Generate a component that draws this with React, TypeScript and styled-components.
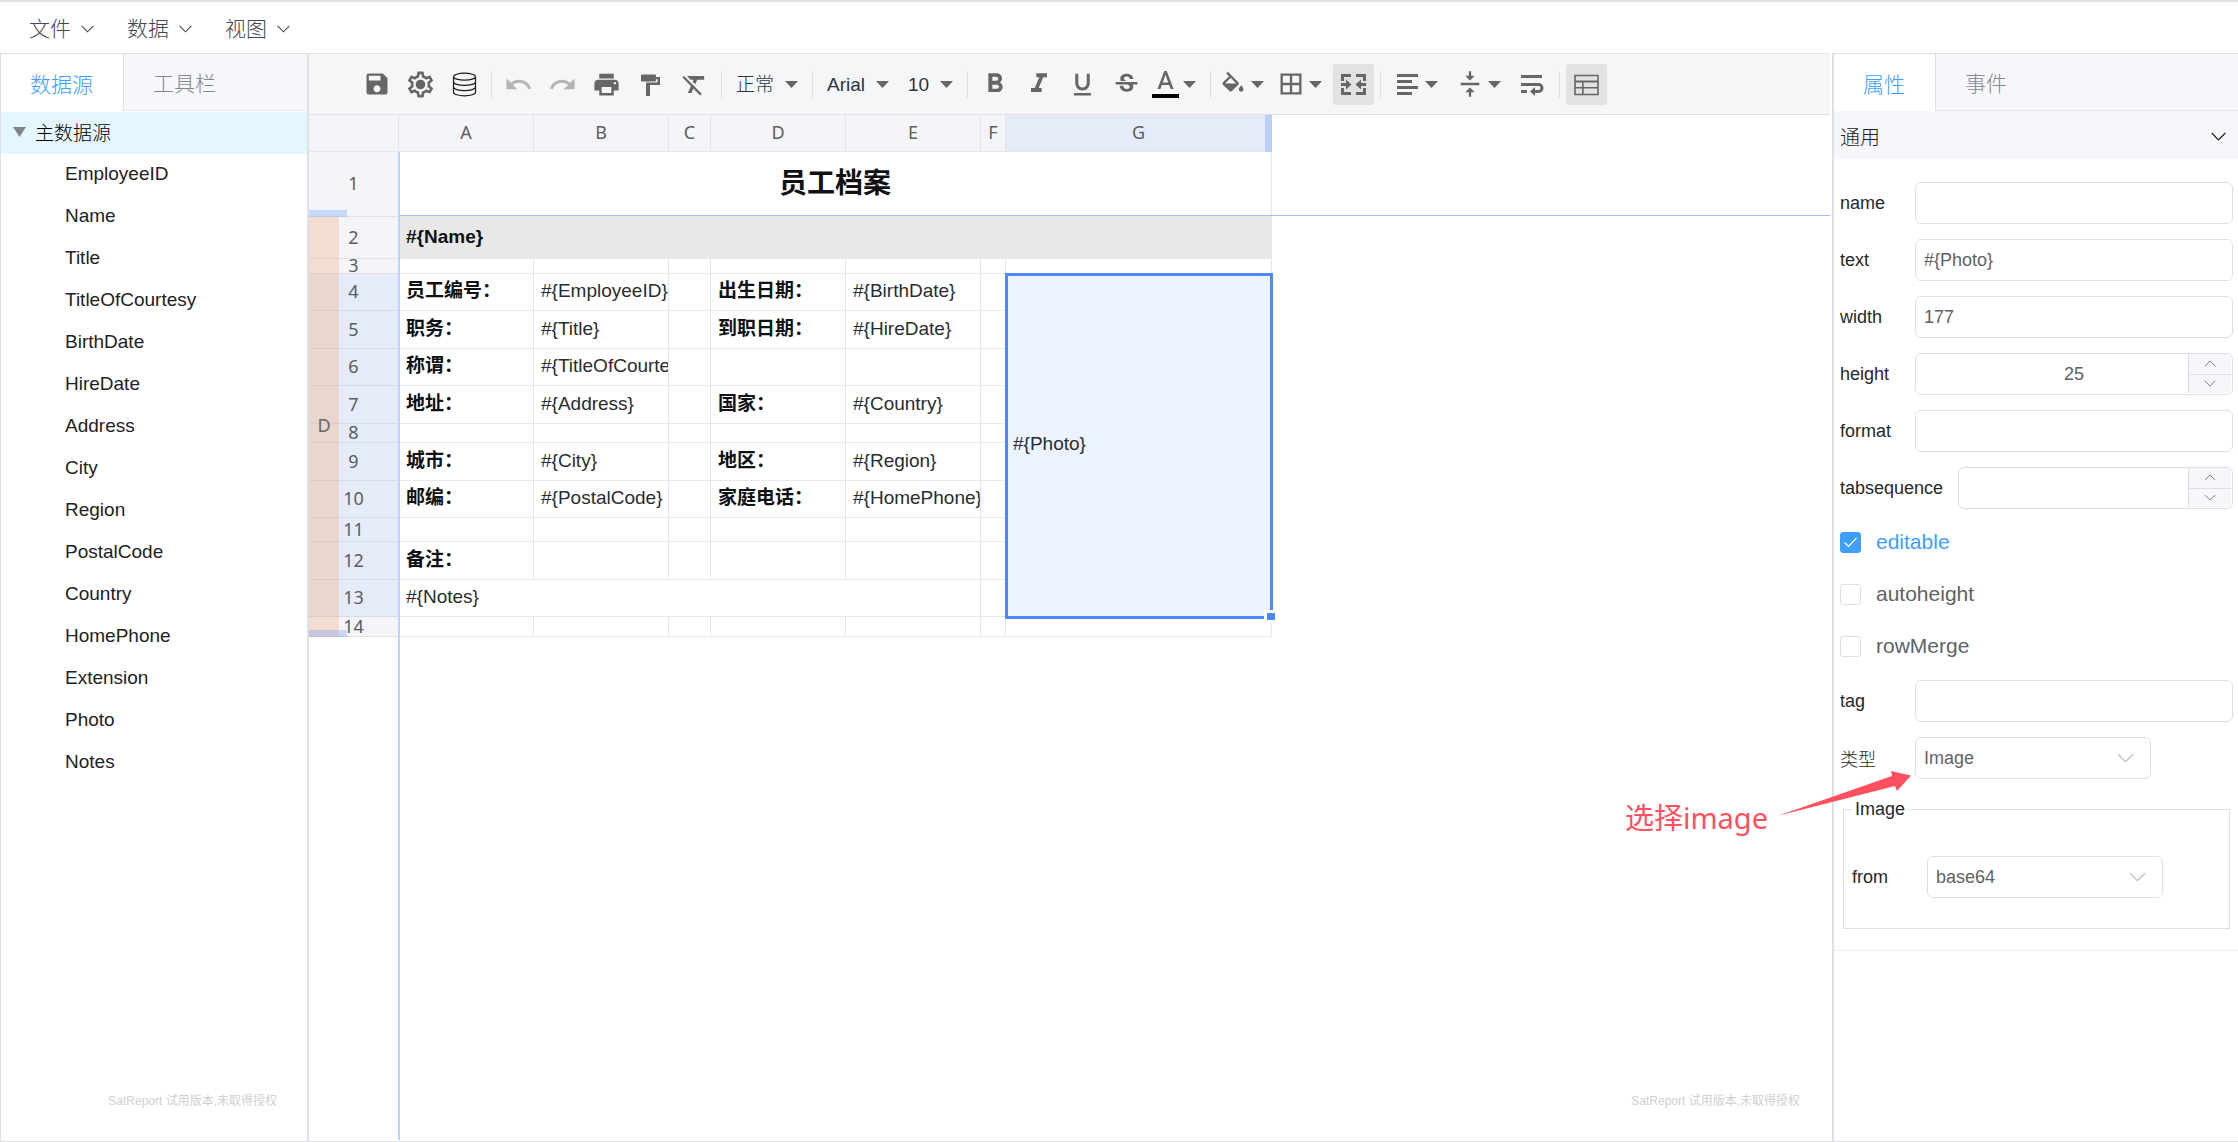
import React from 'react';
import styled, { createGlobalStyle } from 'styled-components';
import {
  MdSave,
  MdUndo,
  MdRedo,
  MdPrint,
  MdFormatClear,
  MdFormatBold,
  MdFormatItalic,
  MdFormatUnderlined,
  MdStrikethroughS,
  MdBorderAll,
  MdVerticalAlignCenter,
} from 'react-icons/md';

const line = '#dcdfe6';
const primary = '#409eff';
const accent = '#4b89ff';
const iconGray = '#666666';
const headBg = '#f4f5f8';
const headSelected = '#e5ebf8';

const GlobalStyle = createGlobalStyle`
  *, *::before, *::after { box-sizing: border-box; }
  body {
    margin: 0;
    background: #fff;
    font-family: "Liberation Sans", "Noto Sans CJK SC", sans-serif;
    color: #26272a;
  }
  button, input, select { font: inherit; color: inherit; margin: 0; }
  button { border: 0; background: none; padding: 0; cursor: pointer; }
`;

const Page = styled.div`
  display: flex;
  flex-direction: column;
  min-height: 100vh;
  border-top: 2px solid #e1e1e3;
  border-bottom: 1px solid #dfe0e3;
`;

/* ---------- menu ---------- */

const MenuBar = styled.nav`
  display: flex;
  align-items: center;
  gap: 33px;
  height: 51px;
  padding: 2px 29px 0;
`;

const MenuButton = styled.button`
  display: flex;
  align-items: center;
  gap: 10px;
  font-size: 21px;
  font-weight: 300;
  line-height: 30px;
  color: #45474c;
`;

const Workspace = styled.div`
  flex: 1;
  display: grid;
  grid-template-columns: 309px minmax(0, 1fr) 406px;
`;

/* ---------- tabs ---------- */

const Tabs = styled.div`
  display: flex;
  height: 58px;
  background: #f5f7fa;
  border-top: 1px solid ${line};
  border-bottom: 1px solid #e4e7ed;
`;

const Tab = styled.button<{ $active?: boolean }>`
  padding: 0 30px 0 29px;
  margin-bottom: ${p => (p.$active ? '-1px' : '0')};
  font-size: 21px;
  font-weight: 300;
  color: ${p => (p.$active ? primary : '#85888f')};
  background: ${p => (p.$active ? '#fff' : 'transparent')};
  border-right: 1px solid ${p => (p.$active ? line : 'transparent')};
`;

/* ---------- data source panel ---------- */

const SourcePanel = styled.aside`
  display: flex;
  flex-direction: column;
  border-left: 1px solid ${line};
  border-right: 2px solid #dfe1e6;
`;

const Tree = styled.ul`
  list-style: none;
  margin: 0;
  padding: 1px 0 0;
  font-size: 19px;
  color: #1f2124;
`;

const TreeRow = styled.button<{ $root?: boolean }>`
  display: flex;
  align-items: center;
  gap: 9px;
  width: 100%;
  height: 42px;
  padding: 0 0 3px ${p => (p.$root ? '12px' : '64px')};
  font-weight: ${p => (p.$root ? 300 : 400)};
  color: ${p => (p.$root ? '#000' : '#1f2124')};
  text-align: left;
  background: ${p => (p.$root ? '#e4f6fe' : 'transparent')};
`;

const Watermark = styled.p`
  align-self: flex-end;
  margin: auto 30px 31px 0;
  font-size: 12px;
  line-height: 18px;
  color: #cfcfcf;
`;

/* ---------- toolbar ---------- */

const Center = styled.main`
  display: flex;
  flex-direction: column;
  margin-right: 2px;
`;

const Toolbar = styled.div`
  display: flex;
  align-items: center;
  gap: 3px;
  height: 62px;
  padding-left: 47px;
  background: #f5f6f8;
  border-top: 1px solid #e4e5e8;
  border-bottom: 1px solid #dfe1e4;
  color: ${iconGray};
`;

const ToolButton = styled.button<{ $on?: boolean; $faded?: boolean }>`
  display: flex;
  align-items: center;
  justify-content: center;
  width: 41px;
  height: 41px;
  border-radius: 3px;
  background: ${p => (p.$on ? '#e1e2e4' : 'transparent')};
  opacity: ${p => (p.$faded ? 0.45 : 1)};
`;

const DropButton = styled.button<{ $wide?: boolean }>`
  display: flex;
  align-items: center;
  gap: 4px;
  height: 41px;
  padding: 0 8px 0 ${p => (p.$wide ? '7px' : '2px')};
`;

const ToolSelectBox = styled.span`
  position: relative;
  display: flex;
  align-items: center;
  > svg { position: absolute; right: 8px; pointer-events: none; }
`;

const ToolSelect = styled.select`
  appearance: none;
  height: 41px;
  padding: 0 31px 0 8px;
  border: 0;
  background: none;
  font-size: 19px;
  font-weight: 300;
  color: #2a3542;
`;

const Divider = styled.span`
  width: 1px;
  height: 27px;
  margin: 0 3px;
  background: #dcdee1;
`;

/* ---------- sheet ---------- */

const SheetArea = styled.section`
  position: relative;
  flex: 1;
  display: flex;
  flex-direction: column;
  align-items: flex-start;
`;

const Sheet = styled.table`
  table-layout: fixed;
  width: 963px;
  border-spacing: 0;
  font-size: 19px;
  color: #1b1c1e;
`;

const ColHead = styled.th<{ $selected?: boolean }>`
  padding: 0 0 3px;
  font: 400 18px/26px "Noto Sans", sans-serif;
  color: #5c5d60;
  background: ${p => (p.$selected ? headSelected : headBg)};
  border-right: 1px solid #e2e4e8;
  border-bottom: 1px solid #e4e6ea;
`;

const RowHead = styled.th<{ $selected?: boolean; $band?: boolean }>`
  padding: 0 0 2px;
  font: 400 18px/12px "Noto Sans", sans-serif;
  color: #5c5d60;
  background: ${p => {
    const base = p.$selected ? headSelected : headBg;
    const band = p.$selected ? '#e8d6cf' : '#f4ddd0';
    return p.$band ? `linear-gradient(to right, ${band} 30px, ${base} 30px)` : base;
  }};
  border-right: 1px solid #e2e4e8;
  border-bottom: 1px solid rgba(190, 180, 185, 0.32);
`;

const Cell = styled.td<{ $bold?: boolean; $fill?: boolean; $title?: boolean }>`
  position: relative;
  padding: ${p => (p.$title ? '0' : '0 0 2px 7px')};
  overflow: hidden;
  white-space: nowrap;
  font-size: ${p => (p.$title ? '28px' : '19px')};
  line-height: ${p => (p.$title ? '36px' : '22px')};
  font-weight: ${p => (p.$bold ? 700 : 400)};
  text-align: ${p => (p.$title ? 'center' : 'left')};
  color: ${p => (p.$bold ? '#101112' : '#2b2c2e')};
  background: ${p => (p.$fill ? '#e8e8e8' : '#fff')};
  border-right: 1px solid ${p => (p.$fill ? '#e6e6e6' : '#e5e6e8')};
  border-bottom: 1px solid #e8e9eb;
`;

const SelectedCell = styled(Cell)`
  z-index: 1;
  overflow: visible;
  background: #ecf2fe;
`;

const SelectionBox = styled.div`
  position: absolute;
  inset: -1px -2px -3px -1px;
  border: 3px solid ${accent};
`;

const FillHandle = styled.div`
  position: absolute;
  right: -7px;
  bottom: -7px;
  width: 14px;
  height: 13px;
  background: ${accent};
  border: 3px solid #fff;
`;

const BandLabel = styled.span`
  position: absolute;
  left: 0;
  top: 100px;
  width: 30px;
  height: 420px;
  display: flex;
  align-items: center;
  justify-content: center;
  font: 400 18px/26px "Noto Sans", sans-serif;
  color: #6b6667;
`;

const BandGrip = styled.span<{ $top: number }>`
  position: absolute;
  left: 0;
  top: ${p => p.$top}px;
  width: 38px;
  height: 7px;
  background: rgba(75, 137, 255, 0.26);
`;

const ColumnGrip = styled.span`
  position: absolute;
  left: 956px;
  top: 0;
  width: 7px;
  height: 37px;
  background: rgba(75, 137, 255, 0.26);
`;

const FreezeColumn = styled.span`
  position: absolute;
  left: 89px;
  top: 37px;
  bottom: 1px;
  width: 2px;
  background: #bfd2fb;
`;

const FreezeRow = styled.span`
  position: absolute;
  left: 90px;
  right: 0;
  top: 100px;
  height: 1px;
  background: #9dbdf9;
`;

/* ---------- properties panel ---------- */

const PropsPanel = styled.aside`
  position: relative;
  border-left: 2px solid ${line};
  font-size: 18px;
`;

const Section = styled.button`
  display: flex;
  align-items: center;
  justify-content: space-between;
  width: 100%;
  height: 48px;
  padding: 2px 12px 0 6px;
  background: #f5f7fa;
  font-size: 20px;
  font-weight: 300;
  color: #1d1e20;
`;

const Form = styled.form`
  display: flex;
  flex-direction: column;
  gap: 15px;
  padding: 23px 5px 21px 6px;
  border-bottom: 1px solid #ebeef5;
`;

const Field = styled.div`
  display: flex;
  align-items: center;
  gap: 15px;
`;

const Label = styled.label`
  min-width: 60px;
  font-weight: 300;
`;

const TextInput = styled.input<{ $center?: boolean }>`
  flex: 1;
  min-width: 0;
  width: 100%;
  height: 42px;
  padding: 0 8px;
  border: 1px solid ${line};
  border-radius: 6px;
  background: #fff;
  color: #606266;
  outline: none;
  text-align: ${p => (p.$center ? 'center' : 'left')};
`;

const NumberBox = styled.div`
  position: relative;
  flex: 1;
  display: flex;
`;

const Steppers = styled.div`
  position: absolute;
  top: 1px;
  right: 2px;
  bottom: 2px;
  width: 43px;
  display: grid;
  grid-template-rows: 1fr 1fr;
  background: #f5f7fa;
  border-left: 1px solid ${line};
  border-radius: 0 5px 5px 0;
`;

const Step = styled.button`
  display: flex;
  align-items: center;
  justify-content: center;
  color: #75777c;
  & + & { border-top: 1px solid ${line}; }
`;

const Checks = styled.div`
  display: flex;
  flex-direction: column;
  gap: 22px;
  padding: 3px 0 4px;
`;

const CheckLabel = styled.label<{ $on?: boolean }>`
  display: flex;
  align-items: center;
  gap: 15px;
  height: 30px;
  font-size: 21px;
  color: ${p => (p.$on ? primary : '#606266')};
`;

const CheckBox = styled.span`
  display: grid;
  place-items: center;
  > * { grid-area: 1 / 1; }
  > svg { pointer-events: none; }
`;

const CheckInput = styled.input`
  appearance: none;
  width: 21px;
  height: 21px;
  border: 1px solid ${line};
  border-radius: 3px;
  background: #fff;
  &:checked { background: ${primary}; border-color: ${primary}; }
`;

const SelectBox = styled.span`
  position: relative;
  display: flex;
  align-items: center;
  width: 236px;
  > svg { position: absolute; right: 17px; pointer-events: none; }
`;

const Select = styled.select`
  appearance: none;
  width: 100%;
  height: 42px;
  padding: 0 40px 0 8px;
  border: 1px solid ${line};
  border-radius: 6px;
  background: #fff;
  color: #606266;
`;

const Group = styled.fieldset`
  min-width: 0;
  margin: 4px 3px 0;
  padding: 36px 8px 30px;
  border: 1px solid ${line};
`;

const Legend = styled.legend`
  padding: 0 3px;
  line-height: 22px;
`;

const Note = styled.div`
  position: absolute;
  top: 717px;
  right: 326px;
  display: flex;
  align-items: flex-start;
  gap: 8px;
  color: #ff5060;
  white-space: nowrap;
`;

const NoteText = styled.span`
  margin-top: 28px;
  font-family: "Noto Sans", "Noto Sans CJK SC", sans-serif;
  font-size: 29px;
  line-height: 40px;
`;

/* ---------- drawings ---------- */

const Chevron = ({ w = 13, up, color = 'currentColor' }: { w?: number; up?: boolean; color?: string }) => (
  <svg width={w} height={Math.round(w * 0.6)} viewBox="0 0 15 9" fill="none" stroke={color} strokeWidth="1.200">
    <path d={up ? 'M.7 8 7.5 1.2 14.3 8' : 'M.7 1 7.5 7.8 14.3 1'} />
  </svg>
);

const Caret = () => (
  <svg width="13" height="7" viewBox="0 0 13 7" fill={iconGray}>
    <path d="M0 0h13L6.500 7z" />
  </svg>
);

const Glyph = ({ children, box = '0 0 27 27' }: { children: React.ReactNode; box?: string }) => (
  <svg width="27" height="27" viewBox={box} fill="currentColor">
    {children}
  </svg>
);

const GearIcon = () => (
  <svg width="31" height="31" viewBox="0 0 24 24" fill="currentColor">
    <path d="M19.43 12.98c.04-.32.07-.64.07-.98 0-.34-.03-.66-.07-.98l2.110-1.650c.19-.15.24-.42.12-.64l-2-3.460c-.09-.16-.26-.25-.44-.25-.06 0-.12.01-.17.03l-2.490 1c-.52-.4-1.080-.73-1.690-.98l-.38-2.650C14.460 2.180 14.250 2 14 2h-4c-.25 0-.46.18-.49.42l-.38 2.650c-.61.25-1.170.59-1.690.98l-2.490-1c-.06-.02-.12-.03-.18-.03-.17 0-.34.09-.43.25l-2 3.460c-.13.22-.07.49.12.64l2.110 1.650c-.04.32-.07.65-.07.98 0 .33.03.66.07.98l-2.110 1.650c-.19.15-.24.42-.12.64l2 3.460c.09.16.26.25.44.25.06 0 .12-.01.17-.03l2.490-1c.52.4 1.080.73 1.690.98l.38 2.650c.03.24.24.42.49.42h4c.25 0 .46-.18.49-.42l.38-2.650c.61-.25 1.170-.59 1.690-.98l2.490 1c.06.02.12.03.18.03.17 0 .34-.09.43-.25l2-3.460c.12-.22.07-.49-.12-.64l-2.110-1.650zm-1.980-1.710c.04.31.05.52.05.73 0 .21-.02.43-.05.73l-.14 1.130.89.7 1.080.84-.7 1.210-1.270-.51-1.040-.42-.9.68c-.43.32-.84.56-1.250.73l-1.060.43-.16 1.130-.2 1.350h-1.400l-.19-1.350-.16-1.130-1.060-.43c-.43-.18-.83-.41-1.230-.71l-.91-.7-1.060.43-1.270.51-.7-1.210 1.080-.84.89-.7-.14-1.130c-.03-.31-.05-.54-.05-.74s.02-.43.05-.73l.14-1.130-.89-.7-1.080-.84.7-1.210 1.270.51 1.040.42.9-.68c.43-.32.84-.56 1.250-.73l1.060-.43.16-1.130.2-1.350h1.390l.19 1.350.16 1.130 1.060.43c.43.18.83.41 1.230.71l.91.7 1.060-.43 1.270-.51.7 1.210-1.070.85-.89.7.14 1.130z" />
    <circle cx="12" cy="12" r="3.700" />
  </svg>
);

const DatabaseIcon = () => (
  <svg width="27" height="27" viewBox="0 0 27 27" fill="none" stroke="#1c1c1c" strokeWidth="1.200">
    <ellipse cx="13.500" cy="5.700" rx="11" ry="3.500" />
    <path d="M2.500 5.700v15.600c0 1.900 4.900 3.500 11 3.500s11-1.600 11-3.500V5.700" />
    <path d="M2.500 10.900c0 1.900 4.900 3.500 11 3.500s11-1.600 11-3.500M2.500 16.100c0 1.900 4.900 3.500 11 3.500s11-1.600 11-3.500" />
  </svg>
);

const PaintIcon = () => (
  <Glyph>
    <path d="M4 4.500a1 1 0 0 1 1-1h13a1 1 0 0 1 1 1V6h4v8H13v11H9V11.500h11.500V8.300H19v1.200a1 1 0 0 1-1 1H5a1 1 0 0 1-1-1z" />
  </Glyph>
);

const TextColorIcon = () => (
  <Glyph>
    <path d="M12.300 0 5.500 18h2.900l1.500-4h7.300l1.500 4h2.900L14.700 0zm-1.500 11.500 2.700-7.700 2.700 7.700z" />
    <path d="M0 23h27v4H0z" fill="#000" />
  </Glyph>
);

const FillIcon = () => (
  <svg width="28" height="28" viewBox="0 -1.500 24 24" fill="currentColor">
    <path d="M16.560 8.940 7.620 0 6.210 1.410l2.380 2.380-5.150 5.150c-.59.59-.59 1.540 0 2.120l5.500 5.500c.29.29.68.44 1.060.44s.77-.15 1.060-.44l5.500-5.500c.59-.58.59-1.530 0-2.120zM5.210 10 10 5.210 14.790 10H5.210zM19 11.500s-2 2.170-2 3.500c0 1.100.9 2 2 2s2-.9 2-2c0-1.330-2-3.500-2-3.500z" />
  </svg>
);

const MergeIcon = () => (
  <Glyph>
    <path d="M1 3h10v3H4v4H1zM16 3h10v7h-3V6h-7zM1 17h3v4h7v3H1zM23 17h3v7H16v-3h7zM1 12h5V8.500l5.500 5-5.500 5V15H1zM26 12h-5V8.500l-5.500 5 5.500 5V15h5z" />
  </Glyph>
);

const AlignIcon = () => (
  <Glyph>
    <path d="M3 3h21v3H3zM3 9h15v3H3zM3 15h21v3H3zM3 21h15v3H3z" />
  </Glyph>
);

const WrapIcon = () => (
  <Glyph>
    <path d="M2 4h21v3H2zM2 19h6v3H2zM2 12h17.500a5 5 0 0 1 0 10H16v3l-5-4.500 5-4.500v3h3.500a2 2 0 0 0 0-4H2z" />
  </Glyph>
);

const FreezeIcon = () => (
  <Glyph>
    <path d="M2 4.500h23v19H2z" fill="none" stroke="currentColor" strokeWidth="1.600" />
    <path d="M2 9.500h23v2H2zM9 11h1.600v12H9zM2 16h23v1.600H2z" />
  </Glyph>
);

/* ---------- data ---------- */

const fields = [
  'EmployeeID', 'Name', 'Title', 'TitleOfCourtesy', 'BirthDate', 'HireDate', 'Address', 'City',
  'Region', 'PostalCode', 'Country', 'HomePhone', 'Extension', 'Photo', 'Notes',
];

const columns = [
  { name: 'A', width: 135 },
  { name: 'B', width: 135 },
  { name: 'C', width: 42 },
  { name: 'D', width: 135 },
  { name: 'E', width: 135 },
  { name: 'F', width: 25 },
  { name: 'G', width: 266 },
];

/* Each row of the record block: height, then the texts of columns A, B, D and E. */
const rows: { n: number; h: number; t?: string[] }[] = [
  { n: 4, h: 37, t: ['员工编号：', '#{EmployeeID}', '出生日期：', '#{BirthDate}'] },
  { n: 5, h: 38, t: ['职务：', '#{Title}', '到职日期：', '#{HireDate}'] },
  { n: 6, h: 37, t: ['称谓：', '#{TitleOfCourtesy}', '', ''] },
  { n: 7, h: 38, t: ['地址：', '#{Address}', '国家：', '#{Country}'] },
  { n: 8, h: 19 },
  { n: 9, h: 38, t: ['城市：', '#{City}', '地区：', '#{Region}'] },
  { n: 10, h: 37, t: ['邮编：', '#{PostalCode}', '家庭电话：', '#{HomePhone}'] },
  { n: 11, h: 24 },
  { n: 12, h: 38, t: ['备注：', '', '', ''] },
];

const Row = styled.tr<{ $h: number }>`
  height: ${p => p.$h}px;
`;

const ReportSheet = () => (
  <Sheet lang="zh-CN">
    <colgroup>
      <col style={{ width: 90 }} />
      {columns.map(c => <col key={c.name} style={{ width: c.width }} />)}
    </colgroup>
    <thead>
      <Row $h={37}>
        <ColHead />
        {columns.map(c => <ColHead key={c.name} scope="col" $selected={c.name === 'G'}>{c.name}</ColHead>)}
      </Row>
    </thead>
    <tbody>
      <Row $h={65}>
        <RowHead scope="row">1</RowHead>
        <Cell colSpan={7} $title $bold>员工档案</Cell>
      </Row>
      <Row $h={42}>
        <RowHead scope="row" $band>2</RowHead>
        <Cell $bold $fill>{'#{Name}'}</Cell>
        {columns.slice(1).map(c => <Cell key={c.name} $fill />)}
      </Row>
      <Row $h={15}>
        <RowHead scope="row" $band>3</RowHead>
        {columns.map(c => <Cell key={c.name} />)}
      </Row>
      {rows.map(({ n, h, t = [] }) => (
        <Row key={n} $h={h}>
          <RowHead scope="row" $band $selected>{n}</RowHead>
          <Cell $bold>{t[0]}</Cell>
          <Cell>{t[1]}</Cell>
          <Cell />
          <Cell $bold>{t[2]}</Cell>
          <Cell>{t[3]}</Cell>
          <Cell />
          {n === 4 && (
            <SelectedCell rowSpan={10}>
              {'#{Photo}'}
              <SelectionBox />
              <FillHandle />
            </SelectedCell>
          )}
        </Row>
      ))}
      <Row $h={37}>
        <RowHead scope="row" $band $selected>13</RowHead>
        <Cell colSpan={5}>{'#{Notes}'}</Cell>
        <Cell />
      </Row>
      <Row $h={20}>
        <RowHead scope="row" $band>14</RowHead>
        {columns.map(c => <Cell key={c.name} />)}
      </Row>
    </tbody>
  </Sheet>
);

const ToolDrop = ({ label, value }: { label: string; value: string }) => (
  <ToolSelectBox>
    <ToolSelect aria-label={label} defaultValue={value}>
      <option>{value}</option>
    </ToolSelect>
    <Caret />
  </ToolSelectBox>
);

const TextField = ({ name, value = '' }: { name: string; value?: string }) => (
  <Field>
    <Label htmlFor={name}>{name}</Label>
    <TextInput id={name} defaultValue={value} />
  </Field>
);

const NumberField = ({ name, value = '' }: { name: string; value?: string }) => (
  <Field>
    <Label htmlFor={name}>{name}</Label>
    <NumberBox>
      <TextInput id={name} defaultValue={value} inputMode="numeric" $center />
      <Steppers>
        <Step type="button" aria-label={`increase ${name}`}><Chevron w={12} up /></Step>
        <Step type="button" aria-label={`decrease ${name}`}><Chevron w={12} /></Step>
      </Steppers>
    </NumberBox>
  </Field>
);

const SelectField = ({ id, label, value }: { id: string; label: string; value: string }) => (
  <Field>
    <Label htmlFor={id}>{label}</Label>
    <SelectBox>
      <Select id={id} defaultValue={value}>
        <option>{value}</option>
      </Select>
      <Chevron w={17} color="#b8bcc5" />
    </SelectBox>
  </Field>
);

const CheckField = ({ name, checked }: { name: string; checked?: boolean }) => (
  <CheckLabel $on={checked}>
    <CheckBox>
      <CheckInput type="checkbox" defaultChecked={checked} />
      {checked && (
        <svg width="13" height="11" viewBox="0 0 13 11" fill="none" stroke="#fff" strokeWidth="1.200">
          <path d="M.5 5.500 4.500 9.500 12.500 1" />
        </svg>
      )}
    </CheckBox>
    {name}
  </CheckLabel>
);

const watermark = 'SatReport 试用版本,未取得授权';

export default function App() {
  return (
    <Page>
      <GlobalStyle />
      <MenuBar>
        {['文件', '数据', '视图'].map(m => (
          <MenuButton key={m}>{m}<Chevron /></MenuButton>
        ))}
      </MenuBar>
      <Workspace>
        <SourcePanel>
          <Tabs role="tablist">
            <Tab role="tab" aria-selected $active>数据源</Tab>
            <Tab role="tab">工具栏</Tab>
          </Tabs>
          <Tree>
            <li>
              <TreeRow $root>
                <svg width="13" height="10" viewBox="0 0 13 10" fill="#7f8488"><path d="M0 0h13L6.500 10z" /></svg>
                主数据源
              </TreeRow>
            </li>
            {fields.map(f => <li key={f}><TreeRow>{f}</TreeRow></li>)}
          </Tree>
          <Watermark>{watermark}</Watermark>
        </SourcePanel>

        <Center>
          <Toolbar role="toolbar">
            <ToolButton aria-label="save"><MdSave size={28} /></ToolButton>
            <ToolButton aria-label="settings"><GearIcon /></ToolButton>
            <ToolButton aria-label="data source"><DatabaseIcon /></ToolButton>
            <Divider />
            <ToolButton aria-label="undo" $faded><MdUndo size={29} /></ToolButton>
            <ToolButton aria-label="redo" $faded><MdRedo size={29} /></ToolButton>
            <ToolButton aria-label="print"><MdPrint size={29} /></ToolButton>
            <ToolButton aria-label="format painter"><PaintIcon /></ToolButton>
            <ToolButton aria-label="clear format"><MdFormatClear size={29} /></ToolButton>
            <Divider />
            <ToolDrop label="format" value="正常" />
            <Divider />
            <ToolDrop label="font" value="Arial" />
            <ToolDrop label="font size" value="10" />
            <Divider />
            <ToolButton aria-label="bold"><MdFormatBold size={32} /></ToolButton>
            <ToolButton aria-label="italic"><MdFormatItalic size={32} /></ToolButton>
            <ToolButton aria-label="underline"><MdFormatUnderlined size={29} /></ToolButton>
            <ToolButton aria-label="strikethrough"><MdStrikethroughS size={29} /></ToolButton>
            <DropButton aria-label="text colour"><TextColorIcon /><Caret /></DropButton>
            <Divider />
            <DropButton aria-label="fill colour"><FillIcon /><Caret /></DropButton>
            <DropButton aria-label="borders"><MdBorderAll size={28} /><Caret /></DropButton>
            <ToolButton aria-label="merge cells" $on><MergeIcon /></ToolButton>
            <Divider />
            <DropButton aria-label="align" $wide><AlignIcon /><Caret /></DropButton>
            <DropButton aria-label="vertical align" $wide><MdVerticalAlignCenter size={28} /><Caret /></DropButton>
            <ToolButton aria-label="wrap text"><WrapIcon /></ToolButton>
            <Divider />
            <ToolButton aria-label="freeze" $on><FreezeIcon /></ToolButton>
          </Toolbar>
          <SheetArea>
            <ReportSheet />
            <BandLabel>D</BandLabel>
            <BandGrip $top={95} />
            <BandGrip $top={515} />
            <ColumnGrip />
            <FreezeColumn />
            <FreezeRow />
            <Watermark>{watermark}</Watermark>
          </SheetArea>
        </Center>

        <PropsPanel>
          <Tabs role="tablist">
            <Tab role="tab" aria-selected $active>属性</Tab>
            <Tab role="tab">事件</Tab>
          </Tabs>
          <Section>通用<Chevron w={15} /></Section>
          <Form>
            <TextField name="name" />
            <TextField name="text" value="#{Photo}" />
            <TextField name="width" value="177" />
            <NumberField name="height" value="25" />
            <TextField name="format" />
            <NumberField name="tabsequence" />
            <Checks>
              <CheckField name="editable" checked />
              <CheckField name="autoheight" />
              <CheckField name="rowMerge" />
            </Checks>
            <TextField name="tag" />
            <SelectField id="type" label="类型" value="Image" />
            <Group>
              <Legend>Image</Legend>
              <SelectField id="from" label="from" value="base64" />
            </Group>
          </Form>
          <Note>
            <NoteText>选择image</NoteText>
            <svg width="136" height="48" viewBox="0 0 136 48" fill="currentColor">
              <path d="M1 46 116 6 115 1 135 5.500 121 21 119 16z" />
            </svg>
          </Note>
        </PropsPanel>
      </Workspace>
    </Page>
  );
}
